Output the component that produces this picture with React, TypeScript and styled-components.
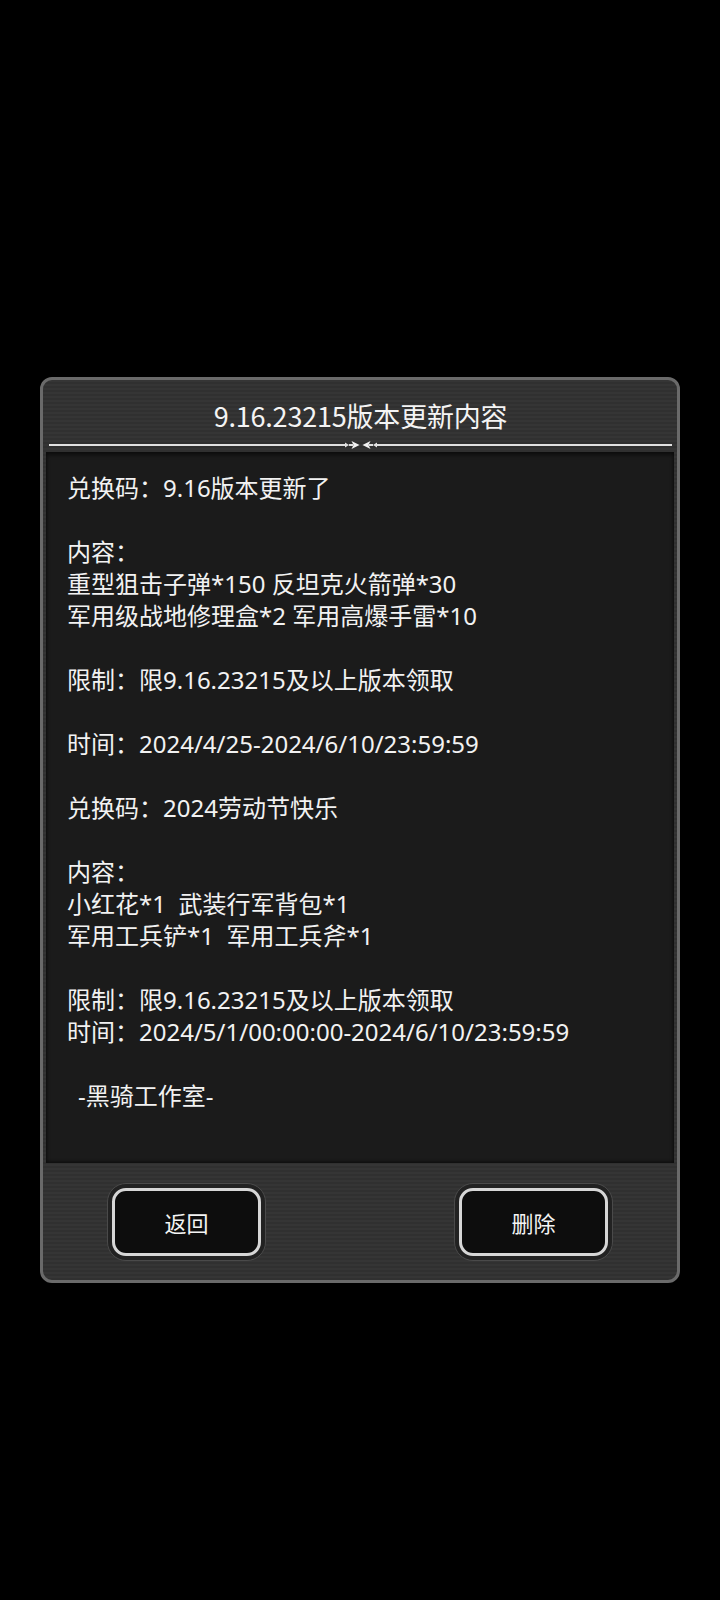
import React from "react";
import styled, { createGlobalStyle } from "styled-components";

const GlobalStyle = createGlobalStyle`
  html, body {
    margin: 0;
    padding: 0;
    background: #000;
  }
  body {
    font-family: "Noto Sans CJK SC", "Noto Sans", sans-serif;
    color: #f2f2f2;
  }
`;

const Page = styled.div`
  width: 720px;
  height: 1600px;
  padding-top: 377px;
  box-sizing: border-box;
  display: flex;
  justify-content: center;
  align-items: flex-start;
`;

const Dialog = styled.div`
  width: 640px;
  box-sizing: border-box;
  border: 3px solid #6a6a6a;
  border-radius: 12px;
  background: repeating-linear-gradient(
    180deg,
    #353535 0px,
    #353535 2px,
    #303030 2px,
    #303030 4px
  );
  display: flex;
  flex-direction: column;
  overflow: hidden;
`;

const Header = styled.div`
  height: 72px;
  box-sizing: border-box;
  padding: 18px 5px 0 6px;
  display: flex;
  flex-direction: column;
`;

const Title = styled.h1`
  margin: 0;
  font-size: 27px;
  font-weight: 400;
  line-height: 36px;
  text-align: center;
  color: #f4f4f4;
  letter-spacing: -0.2px;
`;

const Divider = styled.div`
  margin-top: 8px;
  height: 6px;
  display: flex;
  align-items: center;
`;

const Rule = styled.div`
  flex: 1;
  height: 2px;
  background: #e2e2e2;
`;

const Content = styled.div`
  margin: 0 3px;
  height: 711px;
  box-sizing: border-box;
  padding: 20px 21px;
  background: #1b1b1b;
  box-shadow: inset 0 3px 4px rgba(0, 0, 0, 0.55), inset 0 -2px 3px rgba(0, 0, 0, 0.4);
  font-family: "Noto Sans", "Noto Sans CJK SC", sans-serif;
  font-size: 24px;
  line-height: 32px;
  white-space: pre-wrap;
  color: #f2f2f2;
`;

const Line = styled.div<{ $indent?: boolean }>`
  min-height: 32px;
  padding-left: ${(p) => (p.$indent ? "11px" : "0")};
`;

const Footer = styled.div`
  height: 117px;
  padding: 0 64px;
  display: flex;
  align-items: center;
  justify-content: space-between;
`;

const ButtonRing = styled.div`
  padding: 4px;
  border-radius: 19px;
  background: #222;
  border: 1px solid #4a4a4a;
`;

const ActionButton = styled.button`
  width: 149px;
  height: 68px;
  box-sizing: border-box;
  border: 3px solid #d6d6d6;
  border-radius: 14px;
  background: #0d0d0d;
  color: #f4f4f4;
  font-family: "Noto Sans CJK SC", "Noto Sans", sans-serif;
  font-size: 22px;
  display: flex;
  align-items: center;
  justify-content: center;
  cursor: pointer;
`;

const Arrows: React.FC = () => (
  <svg width="38" height="10" viewBox="0 0 38 10">
    <rect x="0" y="4" width="4" height="2" fill="#e2e2e2" />
    <path d="M3 2.5 L7 5 L3 7.5 Z M7 4 L11 4 L11 6 L7 6 Z" fill="#e2e2e2" />
    <path d="M9.5 1 L17.5 5 L9.5 9 L11.5 5 Z" fill="#f4f4f4" />
    <path d="M28.5 1 L20.5 5 L28.5 9 L26.5 5 Z" fill="#f4f4f4" />
    <path d="M35 2.5 L31 5 L35 7.5 Z M27 4 L31 4 L31 6 L27 6 Z" fill="#e2e2e2" />
    <rect x="34" y="4" width="4" height="2" fill="#e2e2e2" />
  </svg>
);

const lines: { text: string; indent?: boolean }[] = [
  { text: "兑换码：9.16版本更新了" },
  { text: "" },
  { text: "内容：" },
  { text: "重型狙击子弹*150 反坦克火箭弹*30" },
  { text: "军用级战地修理盒*2 军用高爆手雷*10" },
  { text: "" },
  { text: "限制：限9.16.23215及以上版本领取" },
  { text: "" },
  { text: "时间：2024/4/25-2024/6/10/23:59:59" },
  { text: "" },
  { text: "兑换码：2024劳动节快乐" },
  { text: "" },
  { text: "内容：" },
  { text: "小红花*1  武装行军背包*1" },
  { text: "军用工兵铲*1  军用工兵斧*1" },
  { text: "" },
  { text: "限制：限9.16.23215及以上版本领取" },
  { text: "时间：2024/5/1/00:00:00-2024/6/10/23:59:59" },
  { text: "" },
  { text: "-黑骑工作室-", indent: true },
];

export default function App() {
  return (
    <>
      <GlobalStyle />
      <Page>
        <Dialog>
          <Header>
            <Title>9.16.23215版本更新内容</Title>
            <Divider>
              <Rule />
              <Arrows />
              <Rule />
            </Divider>
          </Header>
          <Content>
            {lines.map((l, i) => (
              <Line key={i} $indent={l.indent}>
                {l.text}
              </Line>
            ))}
          </Content>
          <Footer>
            <ButtonRing>
              <ActionButton>返回</ActionButton>
            </ButtonRing>
            <ButtonRing>
              <ActionButton>删除</ActionButton>
            </ButtonRing>
          </Footer>
        </Dialog>
      </Page>
    </>
  );
}
